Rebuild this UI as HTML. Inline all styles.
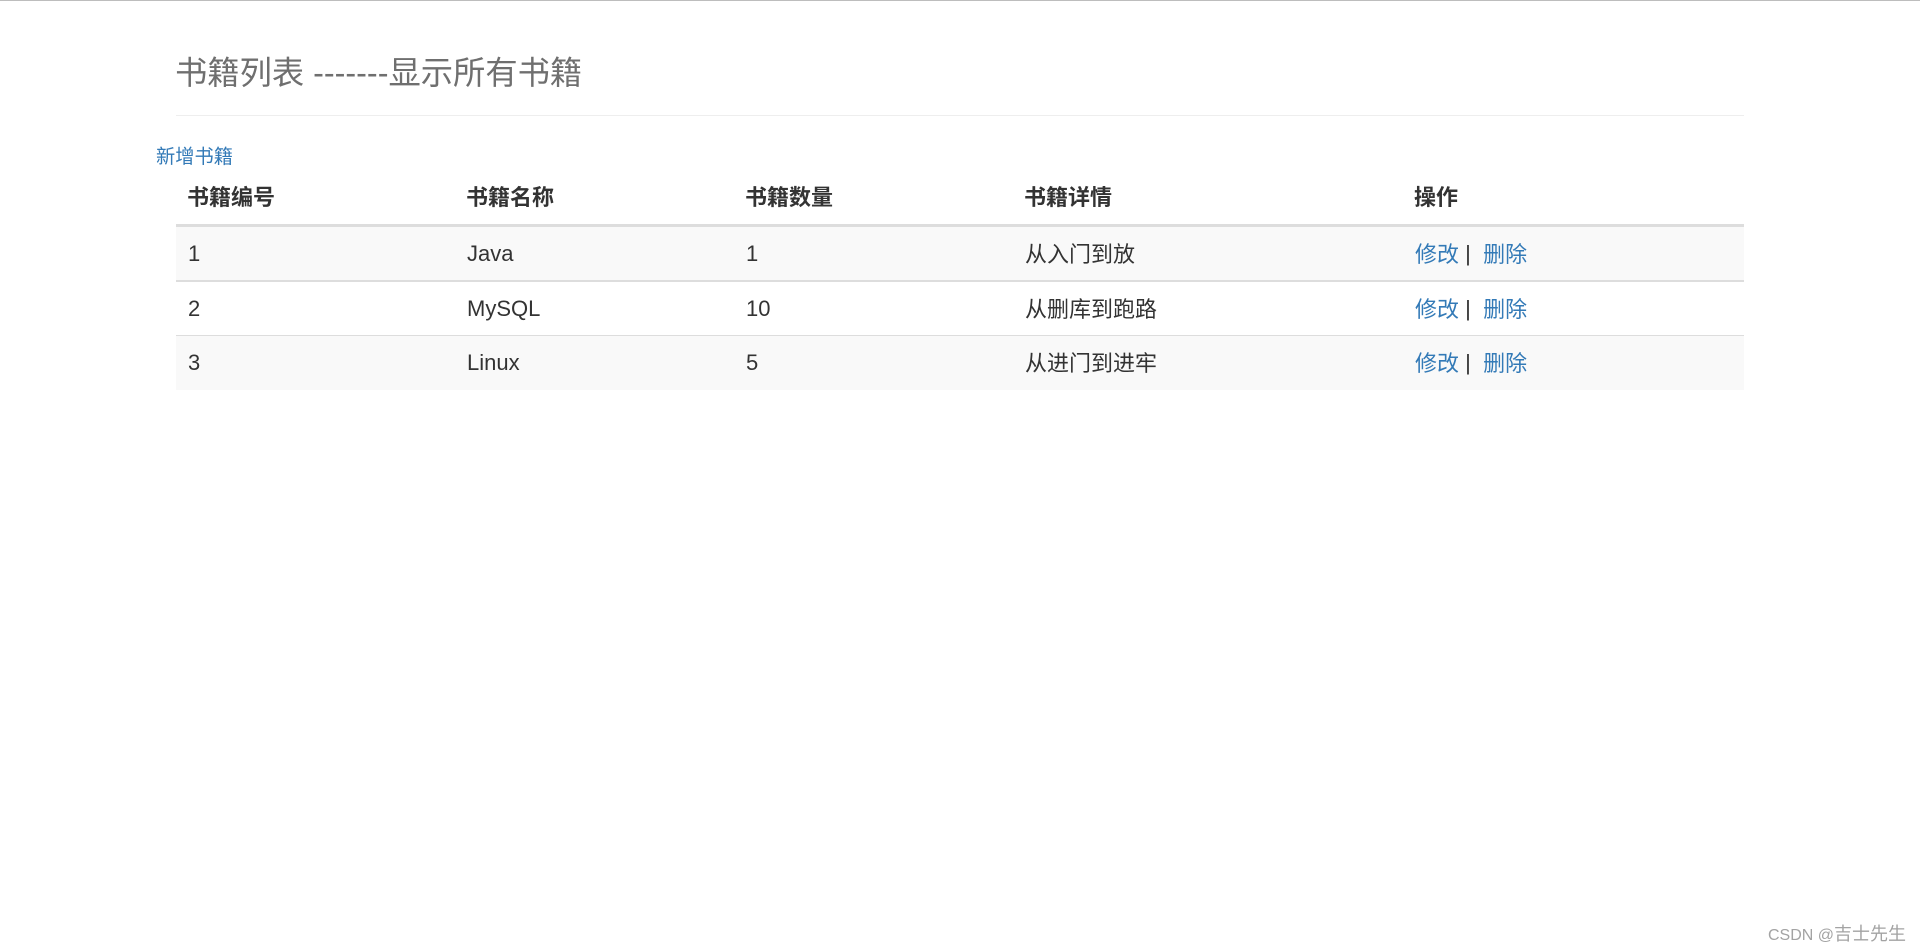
<!DOCTYPE html>
<html lang="zh-CN">
<head>
<meta charset="utf-8">
<title>书籍列表</title>
<style>
html,body{margin:0;padding:0;background:#fff;}
body{width:1920px;height:952px;position:relative;overflow:hidden;font-family:"Liberation Sans","Noto Sans CJK SC",sans-serif;color:#333;}
a{color:#337ab7;text-decoration:none;}
.top{position:absolute;left:0;top:0;width:1920px;height:1px;background:#bdbdbd;}
h1{position:absolute;left:175px;top:49px;margin:0;font-size:32.3px;line-height:48px;font-weight:400;color:#6f6f6f;white-space:nowrap;}
.hr{position:absolute;left:176px;top:115px;width:1568px;height:1px;background:#eee;}
.add{position:absolute;left:156px;top:144px;font-size:19.25px;line-height:28px;white-space:nowrap;}
table{position:absolute;left:176px;top:170px;width:1568px;border-collapse:separate;border-spacing:0;table-layout:fixed;font-size:22px;}
th,td{padding:0 0 0 11px;text-align:left;vertical-align:middle;line-height:32px;white-space:nowrap;}
th{height:52px;padding-top:2px;border-bottom:3px solid #ddd;font-weight:700;}
td{height:53px;padding-left:12px;}
tr.a td{background:#f9f9f9;}
tr.r1 td{border-bottom:2px solid #ddd;}
tr.r2 td{height:53px;border-bottom:1px solid #ddd;}
tr.r3 td{height:54px;}
td a,td span{position:relative;top:1px;}
.wm{position:absolute;left:1768px;top:922px;font-size:16px;line-height:24px;color:#a3a3a3;white-space:nowrap;}
.wm span{font-size:18px;}
</style>
</head>
<body>
<div class="top"></div>
<h1>书籍列表 -------显示所有书籍</h1>
<div class="hr"></div>
<div class="add"><a href="#">新增书籍</a></div>
<table>
<colgroup>
<col style="width:279px"><col style="width:279px"><col style="width:279px"><col style="width:390px"><col style="width:341px">
</colgroup>
<thead>
<tr><th>书籍编号</th><th>书籍名称</th><th>书籍数量</th><th>书籍详情</th><th>操作</th></tr>
</thead>
<tbody>
<tr class="a r1"><td>1</td><td>Java</td><td>1</td><td><span>从入门到放</span></td><td><a href="#">修改</a> | &nbsp;<a href="#">删除</a></td></tr>
<tr class="r2"><td>2</td><td>MySQL</td><td>10</td><td><span>从删库到跑路</span></td><td><a href="#">修改</a> | &nbsp;<a href="#">删除</a></td></tr>
<tr class="a r3"><td>3</td><td>Linux</td><td>5</td><td><span>从进门到进牢</span></td><td><a href="#">修改</a> | &nbsp;<a href="#">删除</a></td></tr>
</tbody>
</table>
<div class="wm">CSDN @<span>吉士先生</span></div>
</body>
</html>
